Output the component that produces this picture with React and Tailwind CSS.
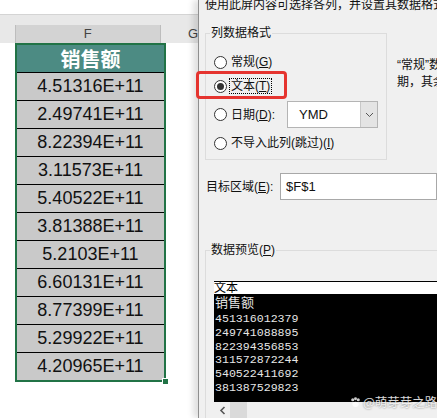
import React from 'react'

const values = [
  '4.51316E+11',
  '2.49741E+11',
  '8.22394E+11',
  '3.11573E+11',
  '5.40522E+11',
  '3.81388E+11',
  '5.2103E+11',
  '6.60131E+11',
  '8.77399E+11',
  '5.29922E+11',
  '4.20965E+11',
]

const preview = ['451316012379', '249741088895', '822394356853', '311572872244', '540522411692', '381387529823']

const ui = "font-['Liberation_Sans','Noto_Sans_CJK_SC',sans-serif]"

function Radio({ checked }) {
  return (
    <span className="w-[13px] h-[13px] rounded-full border border-[#333] bg-white flex items-center justify-center shrink-0">
      {checked && <span className="w-[7px] h-[7px] rounded-full bg-[#333]" />}
    </span>
  )
}

function Sheet() {
  return (
    <div className="w-[198px] shrink-0 bg-white flex flex-col">
      <div className="h-[15px] border-b border-[#d4d4d4]" />
      <div className="h-[10px] bg-[#e8e8e8]" />
      <div className="h-[18px] flex bg-[#e8e8e8] text-[13px] text-[#444] leading-[18px] font-['Liberation_Sans',sans-serif]">
        <div className="w-[16px] border-r border-[#bdbdbd]" />
        <div className="w-[148px] bg-[#d3d3d3] border-r border-[#bdbdbd] text-center">F</div>
        <div className="flex-1 pl-[27px]">G</div>
      </div>
      <div className="relative ml-[15px] w-[151px] border-2 border-[#217346]">
        <div className="h-[27px] bg-[#4c8b83] text-white text-[20px] font-bold leading-[27px] text-center font-['Noto_Sans_CJK_SC',sans-serif]">
          销售额
        </div>
        {values.map((v) => (
          <div
            key={v}
            className="h-[28px] border-t border-black bg-[#c9c9c9] text-[18px] leading-[27px] text-center text-[#111] font-['Liberation_Sans',sans-serif]"
          >
            {v}
          </div>
        ))}
        <span className="absolute -right-[5px] -bottom-[5px] w-[7px] h-[7px] bg-[#217346] border border-white" />
      </div>
    </div>
  )
}

function Dialog() {
  return (
    <div className={`relative z-10 flex-1 min-w-0 bg-[#f0f0f0] border-l border-[#8f8f8f] shadow-[-5px_0_6px_rgba(0,0,0,0.12)] text-[12px] text-[#111] ${ui}`}>
      <div className="pl-[6px] -mt-[2px] h-[14px] leading-[14px] whitespace-nowrap">
        使用此屏内容可选择各列，并设置其数据格式。
      </div>

      <div className="flex mt-[14px]">
        <fieldset className="ml-[6px] w-[182px] h-[134px] border border-[#dcdcdc] shrink-0">
          <legend className="ml-[4px] px-[1px] leading-[14px]">列数据格式</legend>
          <div className="mt-[10px] h-[24px] flex items-center pl-[8px] gap-[4px]">
            <Radio />
            <span>
              常规(<span className="underline">G</span>)
            </span>
          </div>
          <div className="h-[24px] flex items-center pl-[8px] gap-[2px]">
            <Radio checked />
            <span className="border border-dotted border-black px-[1px] leading-[14px]">
              文本(<span className="underline">T</span>)
            </span>
          </div>
          <div className="mt-[3px] h-[27px] flex items-center pl-[8px]">
            <Radio />
            <span className="ml-[4px] w-[56px]">
              日期(<span className="underline">D</span>):
            </span>
            <div className="w-[91px] h-[27px] bg-white border border-[#b4b4b4] flex">
              <span className="flex-1 pl-[11px] leading-[25px] text-[13px]">YMD</span>
              <span className="w-[17px] bg-[#e4e4e4] border-l border-[#c8c8c8] flex items-center justify-center">
                <svg width="9" height="6" viewBox="0 0 9 6">
                  <path d="M1 1l3.5 3.5L8 1" fill="none" stroke="#555" strokeWidth="1" />
                </svg>
              </span>
            </div>
          </div>
          <div className="mt-[3px] h-[24px] flex items-center pl-[8px] gap-[4px]">
            <Radio />
            <span>
              不导入此列(跳过)(<span className="underline">I</span>)
            </span>
          </div>
        </fieldset>
        <div className="ml-[10px] mt-[31px] leading-[17px] whitespace-nowrap">
          <div>“常规”数据将数值转换成数字，日期值会转换成日</div>
          <div>期，其余数据则转换成文本。</div>
        </div>
      </div>

      <div className="mt-[13px] flex items-center h-[27px]">
        <span className="pl-[7px] w-[81px]">
          目标区域(<span className="underline">E</span>):
        </span>
        <div className="flex-1 h-[27px] bg-white border border-[#a8a8a8] pl-[5px] leading-[25px] text-[13px]">$F$1</div>
      </div>

      <fieldset className="mt-[43px] ml-[6px] h-[200px] border-t border-l border-[#dcdcdc]">
        <legend className="ml-[4px] px-[1px] leading-[14px]">
          数据预览(<span className="underline">P</span>)
        </legend>
        <div className="mt-[24px] ml-[8px]">
          <div className="h-[13px] bg-white border-t border-black leading-[12px] text-black">文本</div>
          <div className="h-[108px] bg-black pt-[2px] text-[#e6e6e6]">
            <div className="h-[16px] leading-[14px] text-[13px] pl-[1px]">销售额</div>
            {preview.map((p) => (
              <div key={p} className="h-[13.8px] leading-[13.8px] text-[11.6px] pl-[1px] font-['Liberation_Mono',monospace]">
                {p}
              </div>
            ))}
          </div>
          <div className="h-[16px] bg-[#f0f0f0] flex items-center">
            <span className="w-[16px] flex justify-center">
              <svg width="7" height="9" viewBox="0 0 7 9">
                <path d="M5.5 1L2 4.5 5.5 8" fill="none" stroke="#555" strokeWidth="1.6" />
              </svg>
            </span>
            <span className="w-[17px] h-[16px] bg-[#dadada]" />
          </div>
        </div>
      </fieldset>
    </div>
  )
}

export default function App() {
  return (
    <div className="relative w-[437px] h-[418px] overflow-hidden bg-white flex">
      <Sheet />
      <Dialog />
      <div className="absolute left-[196px] top-[71px] w-[91px] h-[28px] border-[3px] border-[#e5342f] rounded-[4px] z-20" />
      <div className="absolute left-[350px] top-[395px] z-20 flex items-center gap-[2px] text-[12.5px] leading-[14px] text-white/85 font-['Noto_Sans_CJK_SC',sans-serif] [text-shadow:0_0_2px_rgba(0,0,0,0.6)]">
        <svg width="11" height="11" viewBox="0 0 12 12" fill="rgba(255,255,255,0.8)">
          <circle cx="3" cy="3" r="1.7" />
          <circle cx="9" cy="3" r="1.7" />
          <circle cx="6" cy="2" r="1.6" />
          <ellipse cx="6" cy="8" rx="3.4" ry="2.8" />
        </svg>
        <span className="whitespace-nowrap">@萌芽芽之路</span>
      </div>
    </div>
  )
}
